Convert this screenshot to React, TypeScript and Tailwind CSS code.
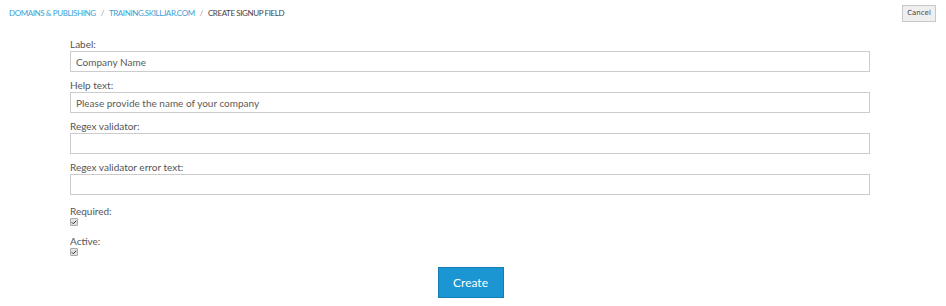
import { Check } from 'lucide-react'

function Field({ label, value }: { label: string; value?: string }) {
  return (
    <div className="flex flex-col">
      <label className="h-[14px] text-[10px] leading-[14px] text-[#555]">{label}</label>
      <input
        readOnly
        value={value ?? ''}
        className="h-[21px] w-full border border-[#ccc] bg-white px-[5px] text-[10px] text-[#5a5a5a] outline-none"
      />
    </div>
  )
}

function CheckField({ label }: { label: string }) {
  return (
    <div className="flex flex-col">
      <span className="h-[14px] text-[10px] leading-[14px] text-[#555]">{label}</span>
      <span className="flex h-[8px] w-[8px] items-center justify-center rounded-[1px] border border-[#aaa] bg-[#e2e2e2]">
        <Check className="h-[7px] w-[7px] text-[#333]" strokeWidth={4} />
      </span>
    </div>
  )
}

export default function App() {
  return (
    <div className="h-[306px] w-[946px] bg-white font-['Lato',sans-serif]">
      <div className="flex items-start justify-between pl-[9px] pr-[10px] pt-[5px]">
        <div className="flex items-center gap-[5px] pt-[2px] text-[8px] uppercase leading-[12px] tracking-[-0.4px]">
          <a className="text-[#3c9fd6]">Domains &amp; Publishing</a>
          <span className="text-[#999]">/</span>
          <a className="text-[#3c9fd6]">training.skilljar.com</a>
          <span className="text-[#999]">/</span>
          <span className="text-[#444]">Create Signup Field</span>
        </div>
        <button className="h-[17px] w-[34px] border border-[#c8c8c8] bg-[#efefef] font-['DejaVu_Sans',sans-serif] text-[7px] leading-[15px] text-[#444]">
          Cancel
        </button>
      </div>

      <div className="ml-[70px] mt-[15px] flex w-[800px] flex-col gap-[6px]">
        <Field label="Label:" value="Company Name" />
        <Field label="Help text:" value="Please provide the name of your company" />
        <Field label="Regex validator:" />
        <Field label="Regex validator error text:" />
      </div>

      <div className="ml-[70px] mt-[9px] flex flex-col gap-[8px]">
        <CheckField label="Required:" />
        <CheckField label="Active:" />
      </div>

      <div className="mt-[11px] flex justify-center pr-[5px]">
        <button className="h-[31px] w-[66px] border border-[#147db3] bg-[#1b96d3] text-[12px] text-white">
          Create
        </button>
      </div>
    </div>
  )
}
